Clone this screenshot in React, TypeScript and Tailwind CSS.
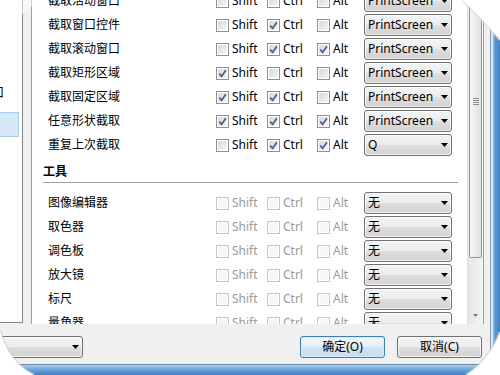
import React from 'react';
import clsx from 'clsx';

type HotkeyRow = {
  label: string;
  shift?: boolean;
  ctrl?: boolean;
  alt?: boolean;
  keyName: string;
  disabled?: boolean;
};

const captureRows: HotkeyRow[] = [
  { label: '截取活动窗口', keyName: 'PrintScreen' },
  { label: '截取窗口控件', ctrl: true, keyName: 'PrintScreen' },
  { label: '截取滚动窗口', ctrl: true, alt: true, keyName: 'PrintScreen' },
  { label: '截取矩形区域', shift: true, keyName: 'PrintScreen' },
  { label: '截取固定区域', shift: true, ctrl: true, keyName: 'PrintScreen' },
  { label: '任意形状截取', shift: true, ctrl: true, alt: true, keyName: 'PrintScreen' },
  { label: '重复上次截取', ctrl: true, alt: true, keyName: 'Q' },
];

const toolRows: HotkeyRow[] = ['图像编辑器', '取色器', '调色板', '放大镜', '标尺', '量角器'].map((label) => ({
  label,
  keyName: '无',
  disabled: true,
}));

const Check: React.FC<{ checked?: boolean; disabled?: boolean }> = ({ checked, disabled }) => (
  <span
    className={clsx(
      'flex h-[13px] w-[13px] shrink-0 items-center justify-center border shadow-[inset_0_0_0_1px_#ffffff]',
      disabled
        ? 'border-[#c6c6c6] bg-[#f6f6f6]'
        : 'border-[#8e8f8f] bg-[linear-gradient(135deg,#d6d6d6,#f7f7f7)]'
    )}
  >
    {checked && (
      <svg width="9" height="9" viewBox="0 0 9 9">
        <path d="M1.2 4.6 L3.6 7.3 L7.9 1.2" fill="none" stroke="#4b5e8a" strokeWidth="1.7" />
      </svg>
    )}
  </span>
);

const Option: React.FC<{ text: string; checked?: boolean; disabled?: boolean; className: string }> = ({
  text,
  checked,
  disabled,
  className,
}) => (
  <div className={clsx('flex items-center gap-[3px]', className)}>
    <Check checked={checked} disabled={disabled} />
    <span className={disabled ? 'text-[#9a9a9a]' : 'text-black'}>{text}</span>
  </div>
);

const Arrow = () => (
  <svg width="7" height="4" viewBox="0 0 7 4" className="shrink-0">
    <path d="M0 0 H7 L3.5 4 Z" fill="#000" />
  </svg>
);

const Combo: React.FC<{ value?: string; className?: string }> = ({ value, className }) => (
  <div
    className={clsx(
      'flex h-[22px] items-center justify-between rounded-[3px] border border-[#707070] pl-[3px] pr-[3px] shadow-[inset_0_0_0_1px_rgba(255,255,255,0.7)]',
      'bg-[linear-gradient(#f3f3f3_0%,#ececec_50%,#dedede_51%,#d2d2d2_100%)]',
      className
    )}
  >
    <span className="leading-[16px]">{value}</span>
    <Arrow />
  </div>
);

const HotkeyLine: React.FC<{ row: HotkeyRow }> = ({ row }) => (
  <div className="flex h-[24px] items-center pl-[5px]">
    <div className="w-[168px] leading-[16px]">{row.label}</div>
    <Option text="Shift" checked={row.shift} disabled={row.disabled} className="w-[51px]" />
    <Option text="Ctrl" checked={row.ctrl} disabled={row.disabled} className="w-[50px]" />
    <Option text="Alt" checked={row.alt} disabled={row.disabled} className="w-[47px]" />
    <Combo value={row.keyName} className="w-[88px]" />
  </div>
);

export default function App() {
  return (
    <div className="relative flex h-[375px] w-[500px] overflow-hidden bg-[#f0f0f0] font-['Noto_Sans','Noto_Sans_CJK_SC',sans-serif] text-[12px] text-black">
      <div className="flex w-[490px] flex-col">
        {/* list + settings pane */}
        <div className="flex h-[324px]">
          <div className="h-[323px] w-[23px] overflow-hidden border-r border-b border-[#828790] bg-white">
            <div className="pt-[85px]">
              <div className="-ml-[8px] h-[16px] leading-[16px]">口</div>
              <div className="-ml-[3px] mt-[11px] h-[25px] w-[22px] border border-[#a9cbef] bg-[#d6e7f8]" />
            </div>
          </div>

          <div className="ml-[8px] flex h-[324px] w-[453px] border-x border-[#a0a0a0] bg-white">
            <div className="w-[435px] overflow-hidden">
              <div className="-mt-[11px] pl-[11px]">
                {captureRows.map((r) => (
                  <HotkeyLine key={r.label} row={r} />
                ))}

                <div className="mr-[9px] border-b border-[#a0a0a0] pt-[7px] pb-[2px] font-bold leading-[16px]">工具</div>

                <div className="mt-[8px]">
                  {toolRows.map((r) => (
                    <HotkeyLine key={r.label} row={r} />
                  ))}
                </div>
              </div>
            </div>

            {/* scrollbar */}
            <div className="flex w-[16px] flex-col border-l border-[#e2e2e2] bg-[linear-gradient(90deg,#e6e6e6,#f4f4f4)]">
              <div className="mx-[1px] flex h-[258px] flex-col items-center rounded-b-[2px] border border-t-0 border-[#979797] bg-[linear-gradient(90deg,#f7f7f7,#e1e1e1)] pt-[98px]">
                <div className="flex flex-col gap-[1px]">
                  <span className="h-[1px] w-[6px] bg-[#8a8a8a]" />
                  <span className="h-[1px] w-[6px] bg-[#8a8a8a]" />
                  <span className="h-[1px] w-[6px] bg-[#8a8a8a]" />
                  <span className="h-[1px] w-[6px] bg-[#8a8a8a]" />
                </div>
              </div>
              <div className="flex-1" />
              <div className="flex h-[18px] items-center justify-center">
                <svg width="5" height="3" viewBox="0 0 5 3">
                  <path d="M0 0 H5 L2.5 3 Z" fill="#7a7a7a" />
                </svg>
              </div>
            </div>
          </div>
        </div>

        {/* bottom buttons */}
        <div className="flex h-[40px] items-start pt-[12px] pr-[8px]">
          <Combo className="-ml-[10px] w-[93px]" />
          <div className="ml-auto flex gap-[12px]">
            <button className="h-[22px] w-[85px] rounded-[3px] border border-[#3c7fb1] bg-[linear-gradient(#f1f7fc_0%,#e3eef8_50%,#d3e4f3_51%,#c7dcef_100%)] leading-[16px] shadow-[inset_0_0_0_1px_#d8ecf9]">
              确定(O)
            </button>
            <button className="h-[22px] w-[85px] rounded-[3px] border border-[#707070] bg-[linear-gradient(#f3f3f3_0%,#ececec_50%,#dedede_51%,#d2d2d2_100%)] leading-[16px] shadow-[inset_0_0_0_1px_rgba(255,255,255,0.7)]">
              取消(C)
            </button>
          </div>
        </div>

        {/* window frame, bottom */}
        <div className="h-[11px] border-t border-[#6f86a3] bg-[linear-gradient(#a8d0f0,#6aa5da_45%,#3f7fc2)]" />
      </div>

      {/* window frame, right */}
      <div className="w-[10px] border-l border-[#8a9db4] bg-[linear-gradient(90deg,#e4ecf4_0px,#cfe0f0_2px,#62a0d8_3px,#3a7abf_10px)]" />

      {/* page curl corners */}
      <svg className="pointer-events-none absolute inset-0" width="500" height="375" viewBox="0 0 500 375">
        <path d="M0 50 Q12 16 42 0 L0 0 Z" fill="#ffffff" opacity="0.55" />
        <path d="M462 0 Q479 15 500 40" fill="none" stroke="#d4d4d4" strokeWidth="3" opacity="0.6" />
        <path d="M462 0 Q479 15 500 40 L500 0 Z" fill="#ffffff" />
        <path d="M0 330 Q8 362 34 375" fill="none" stroke="#cfcfcf" strokeWidth="3" opacity="0.6" />
        <path d="M0 330 Q8 362 34 375 L0 375 Z" fill="#ffffff" />
        <path d="M466 375 Q489 361 500 332" fill="none" stroke="#cfcfcf" strokeWidth="3" opacity="0.6" />
        <path d="M466 375 Q489 361 500 332 L500 375 Z" fill="#ffffff" />
      </svg>
    </div>
  );
}
